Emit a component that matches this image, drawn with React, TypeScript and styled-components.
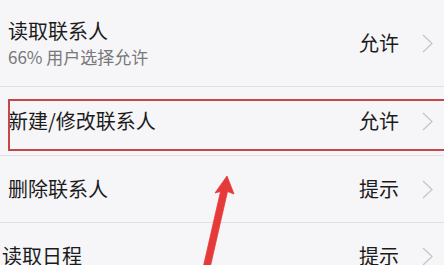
import React from 'react'
import styled, { createGlobalStyle } from 'styled-components'

const GlobalStyle = createGlobalStyle`
  html, body {
    margin: 0;
    padding: 0;
    background: #f6f5f8;
  }
  body {
    font-family: 'Noto Sans CJK SC', 'Noto Sans', sans-serif;
    color: #1b1b1b;
    overflow: hidden;
  }
`

const Page = styled.div`
  position: relative;
  width: 444px;
  height: 265px;
  overflow: hidden;
  background: #f6f5f8;
`

const List = styled.div`
  display: flex;
  flex-direction: column;
`

const Row = styled.div<{ $height: number }>`
  position: relative;
  display: flex;
  align-items: center;
  height: ${(p) => p.$height}px;
  flex-shrink: 0;
  padding: 0 11px 0 8px;
  border-bottom: 1px solid #e0dfe4;
`

const Texts = styled.div<{ $shift?: number }>`
  flex: 1;
  display: flex;
  flex-direction: column;
  gap: 4px;
  margin-left: ${(p) => p.$shift || 0}px;
`

const Title = styled.div`
  font-size: 20px;
  line-height: 24px;
  color: #1b1b1b;
  white-space: nowrap;
`

const Sub = styled.div`
  font-size: 17px;
  line-height: 20px;
  color: #787878;
  white-space: nowrap;
`

const Value = styled.div`
  font-size: 20px;
  line-height: 24px;
  color: #1b1b1b;
  margin-right: 23px;
`

const Chevron = () => (
  <svg width="11" height="19" viewBox="0 0 11 19">
    <polyline points="1,1 10,9.5 1,18" fill="none" stroke="#c6c6c8" strokeWidth="1.3" />
  </svg>
)

const Highlight = styled.div`
  position: absolute;
  left: 8px;
  right: -12px;
  top: 12px;
  height: 48px;
  border: 2px solid #c5474a;
  pointer-events: none;
`

const ArrowLayer = styled.svg`
  position: absolute;
  left: 0;
  top: 0;
  pointer-events: none;
`

interface Item {
  title: string
  sub?: string
  value: string
  height: number
  shift?: number
  marked?: boolean
}

// last row is cut at the left edge in the screenshot
const items: Item[] = [
  { title: '读取联系人', sub: '66% 用户选择允许', value: '允许', height: 86 },
  { title: '新建/修改联系人', value: '允许', height: 68, marked: true },
  { title: '删除联系人', value: '提示', height: 66 },
  { title: '读取日程', value: '提示', height: 66, shift: -6 }
]

export default function App() {
  return (
    <Page>
      <GlobalStyle />
      <List>
        {items.map((it) => (
          <Row key={it.title} $height={it.height}>
            <Texts $shift={it.shift}>
              <Title>{it.title}</Title>
              {it.sub && <Sub>{it.sub}</Sub>}
            </Texts>
            <Value>{it.value}</Value>
            <Chevron />
            {it.marked && <Highlight />}
          </Row>
        ))}
      </List>
      <ArrowLayer width="444" height="265" viewBox="0 0 444 265">
        <polygon
          points="227,176 234,194 227.5,191.5 210,268 203,268 220.5,191.5 215,193"
          fill="#e63a3a"
          stroke="#e63a3a"
          strokeWidth="0.8"
          strokeLinejoin="round"
        />
      </ArrowLayer>
    </Page>
  )
}
